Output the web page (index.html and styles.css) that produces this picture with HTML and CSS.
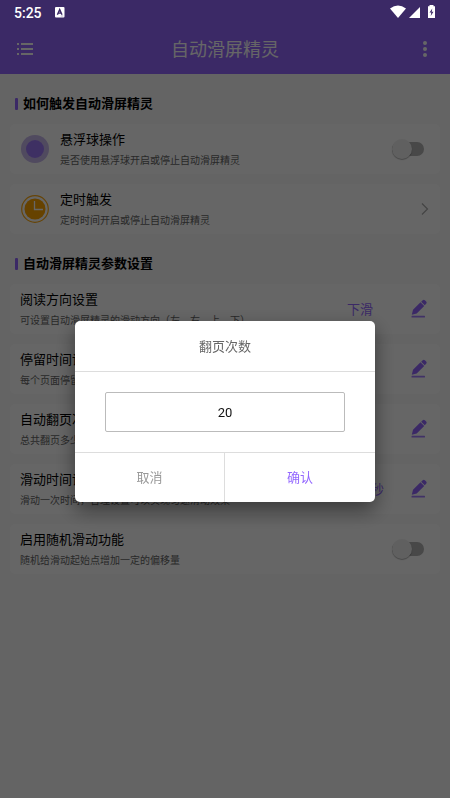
FILE: index.html
```html
<!DOCTYPE html>
<html lang="zh-CN">
<head>
<meta charset="utf-8">
<meta name="viewport" content="width=device-width, initial-scale=1">
<title>自动滑屏精灵</title>
<link rel="stylesheet" href="styles.css">
</head>
<body>
<svg class="defs" aria-hidden="true">
  <symbol id="pencil" viewBox="0 0 18 20">
    <path d="M1.800 15.700l1.200-4.900L10.500 3.300l3.700 3.700-7.500 7.500zM11.200 2.700l1.500-1.500q1.100-1 2.100 0l1.400 1.400q1 1 0 2.100l-1.500 1.500z"/>
    <rect x="1.500" y="16.800" width="13.500" height="1.800" rx=".6" opacity=".85"/>
  </symbol>
</svg>

<div class="status-bar">
  <span class="clock">5:25</span>
  <svg class="badge-a" viewBox="0 0 10 11" aria-hidden="true">
    <rect width="9.500" height="10.500" rx="1" fill="#fff"/>
    <path d="M2.400 7.800L4.700 2.600L7 7.800M3.200 6.100h3" fill="none" stroke="#3b2966" stroke-width="1.400"/>
    <path d="M5.500 9h3M7 7.800v2" stroke="#b9b1cb" stroke-width=".6"/>
  </svg>
  <svg class="signals" viewBox="0 0 46 14" aria-hidden="true">
    <g fill="#fff">
      <path d="M0 3.400Q8-2.400 16 3.400L8 13z"/>
      <path d="M19 13L30 2v11z"/>
      <path d="M39.500 0h4v1.300H45V13h-7V1.300h1.500z"/>
    </g>
    <path d="M42.300 3.500L39.500 7.500h1.800L40.700 11l2.800-4.300h-1.800z" fill="#3b2966"/>
  </svg>
</div>

<header class="app-bar">
  <button class="icon-button" aria-label="菜单">
    <svg width="16" height="14" viewBox="0 0 16 14" fill="currentColor"><path d="M0 1h2v2H0zM4 1h12v2H4zM0 6h2v2H0zM4 6h12v2H4zM0 11h2v2H0zM4 11h12v2H4z"/></svg>
  </button>
  <h1>自动滑屏精灵</h1>
  <button class="icon-button" aria-label="更多">
    <svg width="16" height="18" viewBox="0 0 16 18" fill="currentColor"><circle cx="8" cy="3" r="2"/><circle cx="8" cy="9" r="2"/><circle cx="8" cy="15" r="2"/></svg>
  </button>
</header>

<main>
  <section>
    <h2>如何触发自动滑屏精灵</h2>
    <div class="card">
      <svg class="lead" viewBox="0 0 30 30" aria-hidden="true"><circle cx="15" cy="15" r="14" fill="#c8b8ee"/><circle cx="15" cy="15" r="9" fill="#9c78f8"/></svg>
      <div class="text"><label class="name" for="ball">悬浮球操作</label><p>是否使用悬浮球开启或停止自动滑屏精灵</p></div>
      <input class="switch" type="checkbox" role="switch" id="ball">
    </div>
    <div class="card">
      <svg class="lead" viewBox="0 0 30 30" aria-hidden="true"><circle cx="15" cy="15" r="13.300" fill="none" stroke="#ffab13" stroke-width="1.200"/><circle cx="15" cy="15" r="10.500" fill="#ffa500"/><path d="M14.500 7v8.500H23" fill="none" stroke="#fff" stroke-width="1.300"/></svg>
      <div class="text"><h3 class="name">定时触发</h3><p>定时时间开启或停止自动滑屏精灵</p></div>
      <a class="chevron" href="#timer" aria-label="定时触发"><svg width="10" height="14" viewBox="0 0 10 14" fill="none" stroke="currentColor" stroke-width="1.200"><path d="M2 1.500L7.500 7L2 12.500"/></svg></a>
    </div>
  </section>

  <section>
    <h2>自动滑屏精灵参数设置</h2>
    <div class="card">
      <div class="text"><h3 class="name">阅读方向设置</h3><p>可设置自动滑屏精灵的滑动方向（左、右、上、下）</p></div>
      <span class="value">下滑</span>
      <button class="edit" aria-label="编辑阅读方向"><svg><use href="#pencil"/></svg></button>
    </div>
    <div class="card">
      <div class="text"><h3 class="name">停留时间设置</h3><p>每个页面停留时间</p></div>
      <span class="value">5 秒</span>
      <button class="edit" aria-label="编辑停留时间"><svg><use href="#pencil"/></svg></button>
    </div>
    <div class="card">
      <div class="text"><h3 class="name">自动翻页次数</h3><p>总共翻页多少次</p></div>
      <span class="value">20</span>
      <button class="edit" aria-label="编辑翻页次数"><svg><use href="#pencil"/></svg></button>
    </div>
    <div class="card">
      <div class="text"><h3 class="name">滑动时间设置</h3><p>滑动一次时间，合理设置可以实现匀速滑动效果</p></div>
      <span class="value">500毫秒</span>
      <button class="edit" aria-label="编辑滑动时间"><svg><use href="#pencil"/></svg></button>
    </div>
    <div class="card">
      <div class="text"><label class="name" for="random">启用随机滑动功能</label><p>随机给滑动起始点增加一定的偏移量</p></div>
      <input class="switch" type="checkbox" role="switch" id="random">
    </div>
  </section>
</main>

<div class="scrim">
  <form class="dialog" role="dialog" aria-labelledby="dialog-title">
    <label class="dialog-title" id="dialog-title" for="count">翻页次数</label>
    <div class="dialog-body"><input id="count" type="text" inputmode="numeric" value="20"></div>
    <div class="dialog-actions">
      <button type="button" class="cancel">取消</button>
      <button type="button" class="confirm">确认</button>
    </div>
  </form>
</div>
</body>
</html>
```
FILE: styles.css
```css
* { box-sizing: border-box; }

body {
  margin: 0;
  min-height: 100vh;
  background: #fafafa;
  color: #000;
  font: 13px/20px Roboto, "Noto Sans CJK SC", sans-serif;
}

h1, h2, h3, p { margin: 0; font-weight: 400; }

button {
  padding: 0;
  border: 0;
  background: none;
  color: inherit;
  font: inherit;
}

svg { display: block; }
.defs { position: absolute; width: 0; height: 0; }

.status-bar {
  position: relative;
  z-index: 2;
  display: flex;
  align-items: center;
  height: 24px;
  padding: 0 14px;
  background: #3b2966;
  color: #fff;
}
.clock { padding-top: 2px; font-size: 14px; font-weight: 500; }
.badge-a { width: 10px; height: 11px; margin-left: 13px; }
.signals { width: 46px; height: 14px; margin-left: auto; }

.app-bar {
  display: flex;
  align-items: center;
  justify-content: space-between;
  height: 50px;
  padding: 0 10px;
  background: #9367ff;
  color: #fff;
}
.app-bar h1 { padding-top: 2px; font-size: 18px; }
.icon-button {
  display: grid;
  place-items: center;
  width: 30px;
  height: 30px;
}

main { padding: 0 10px 20px; }

h2 {
  display: flex;
  align-items: center;
  gap: 5px;
  padding: 20px 5px 10px;
  font-size: 13px;
  font-weight: 700;
}
h2::before {
  content: "";
  width: 3px;
  height: 12px;
  border-radius: 1px;
  background: #9367ff;
}

.card {
  display: flex;
  align-items: center;
  height: 50px;
  padding: 0 10px;
  border-radius: 5px;
  background: #fff;
}
.card + .card { margin-top: 10px; }
.lead { width: 30px; height: 30px; margin-right: 10px; }
.text { flex: 1; min-width: 0; padding-top: 2px; white-space: nowrap; }
.name { display: block; font-size: 13px; line-height: 22px; }
.text p { color: #666; font-size: 10px; line-height: 20px; }
.value { width: 80px; padding-top: 2px; color: #9367ff; text-align: center; }
.edit { width: 20px; height: 20px; margin-left: 10px; color: #9367ff; }
.edit svg { width: 18px; height: 20px; fill: currentColor; }
.chevron { color: #aaa; }

.switch {
  appearance: none;
  display: flex;
  align-items: center;
  width: 32px;
  height: 14px;
  margin: 0 6px;
  border-radius: 7px;
  background: #b3b3b3;
}
.switch::before {
  content: "";
  flex: none;
  width: 20px;
  height: 20px;
  border-radius: 50%;
  background: #f1f1f1;
  box-shadow: 0 1px 1px rgba(0, 0, 0, .3);
}

.scrim {
  position: fixed;
  inset: 0;
  z-index: 1;
  display: flex;
  align-items: center;
  justify-content: center;
  padding: 25px 20px 0;
  background: rgba(0, 0, 0, .6);
}
.dialog {
  width: 100%;
  max-width: 300px;
  border-radius: 5px;
  background: #fff;
  box-shadow: 0 8px 20px rgba(0, 0, 0, .45);
}
.dialog-title {
  display: block;
  padding-top: 2px;
  color: #666;
  line-height: 48px;
  text-align: center;
}
.dialog-body {
  padding: 20px 30px;
  border: solid #ddd;
  border-width: 1px 0;
}
.dialog-body input {
  display: block;
  width: 100%;
  height: 40px;
  padding: 0;
  border: 1px solid #bbb;
  border-radius: 2px;
  background: #fff;
  color: #111;
  font: inherit;
  text-align: center;
  outline: 0;
}
.dialog-actions {
  display: grid;
  grid-template-columns: 1fr 1fr;
  height: 49px;
}
.cancel { border-right: 1px solid #ddd; color: #999; }
.confirm { color: #9367ff; }
```
